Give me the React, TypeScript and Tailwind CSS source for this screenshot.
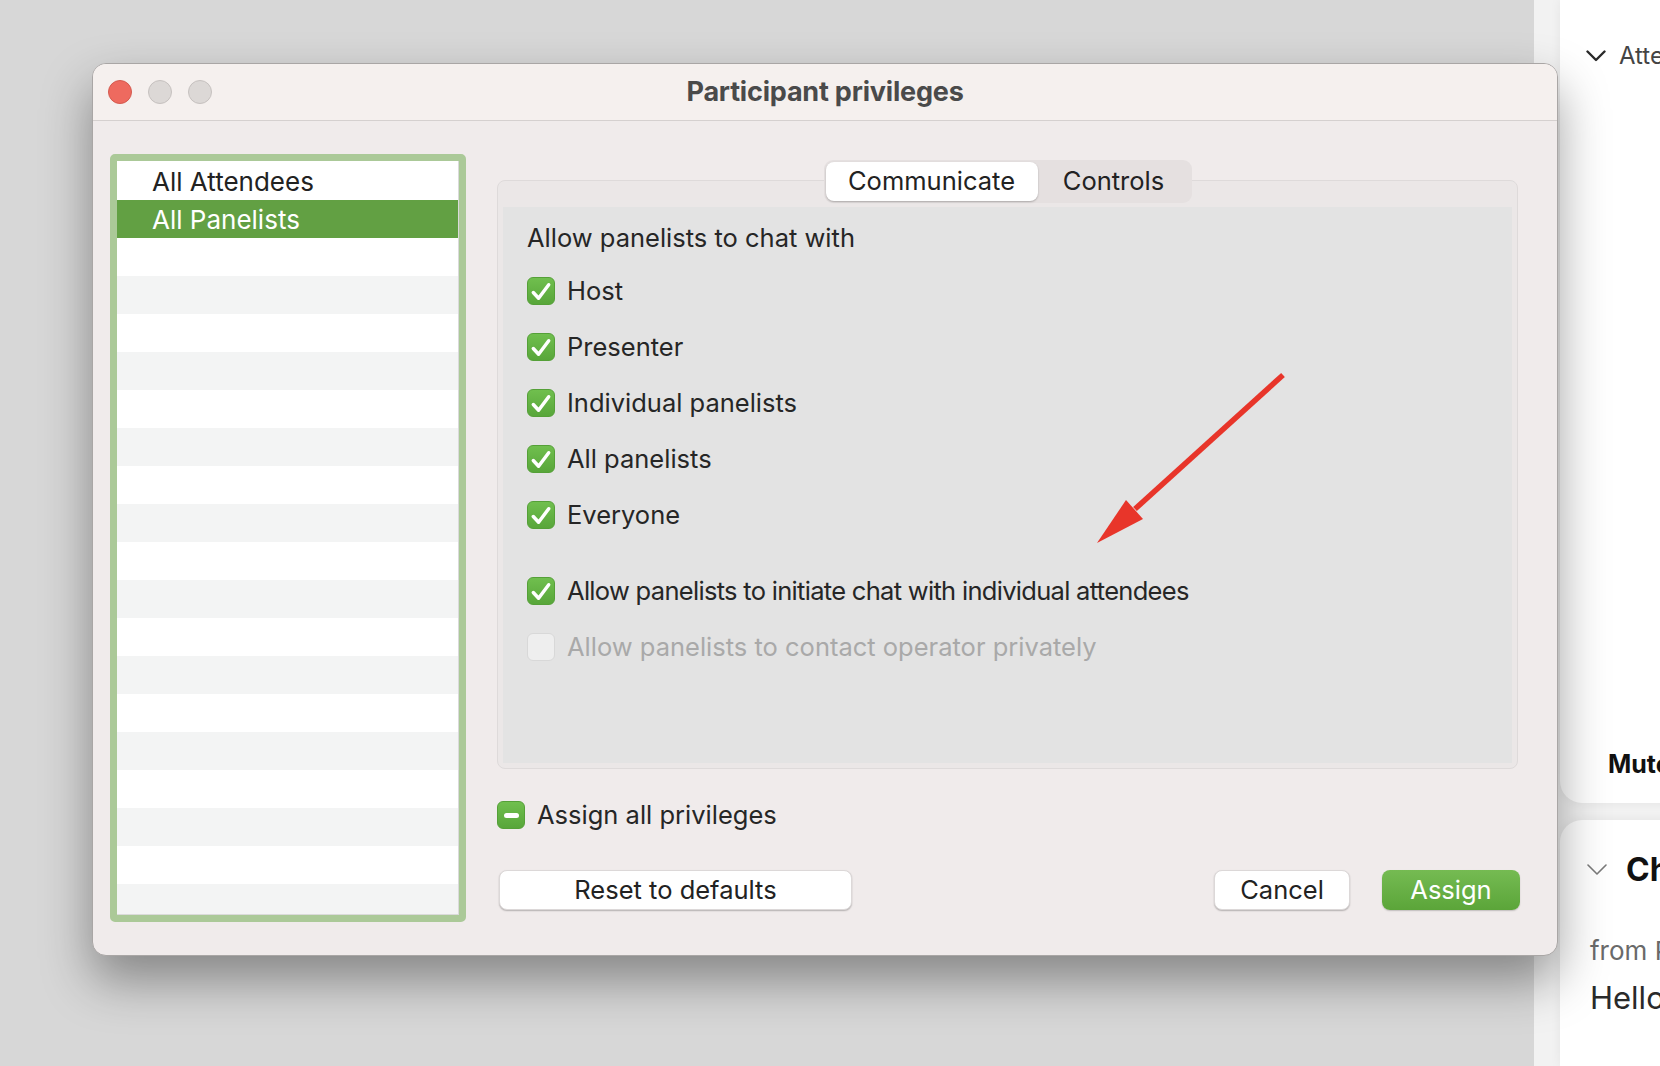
import React from "react";

const Check = () => (
  <svg viewBox="0 0 27 27" className="w-[27px] h-[27px]">
    <path
      d="M5.5 14.5 L11 20.5 L21.5 6.5"
      fill="none"
      stroke="white"
      strokeWidth="3.6"
      strokeLinecap="round"
      strokeLinejoin="round"
    />
  </svg>
);

const CheckBox = ({ state }: { state: "on" | "off" | "mixed" }) => {
  if (state === "off") {
    return (
      <div className="w-[28px] h-[28px] shrink-0 rounded-[6px] border border-[#d8d8d8] bg-[#eeeeee]" />
    );
  }
  return (
    <div className="w-[28px] h-[28px] shrink-0 rounded-[6px] bg-gradient-to-b from-[#70bf4e] to-[#58a63a] border border-[#55a038] flex items-center justify-center">
      {state === "on" ? (
        <Check />
      ) : (
        <div className="w-[15px] h-[5px] rounded-full bg-white" />
      )}
    </div>
  );
};

const Option = ({
  label,
  state = "on",
  disabled,
  tight,
}: {
  label: string;
  state?: "on" | "off" | "mixed";
  disabled?: boolean;
  tight?: boolean;
}) => (
  <div className="h-[56px] flex items-center gap-[12px]">
    <CheckBox state={state} />
    <span
      className={
        (disabled ? "text-[#a9a9a9] " : "text-[#262626] ") +
        (tight
          ? "text-[25.5px] leading-[30px] tracking-[-0.7px]"
          : "text-[25.5px] leading-[30px]")
      }
    >
      {label}
    </span>
  </div>
);

const TrafficLight = ({ red }: { red?: boolean }) => (
  <div
    className={
      red
        ? "w-[24px] h-[24px] rounded-full bg-[#ee6a5f] border border-[#d45a4f]"
        : "w-[24px] h-[24px] rounded-full bg-[#dcd8d6] border border-[#c6c1bf]"
    }
  />
);

const listRows = Array.from({ length: 20 }, (_, i) => i);

const Arrow = () => (
  <svg
    className="absolute left-[998px] top-[306px] w-[200px] h-[180px] pointer-events-none"
    viewBox="0 0 200 180"
  >
    <line
      x1="192"
      y1="5"
      x2="44"
      y2="139"
      stroke="#e8352a"
      strokeWidth="5.5"
    />
    <polygon points="6,173 52,149 35,130" fill="#e8352a" />
  </svg>
);

export default function App() {
  return (
    <div className="flex w-[1660px] h-[1066px] overflow-hidden bg-[#d7d7d7] font-[Inter,'Liberation_Sans',sans-serif]">
      {/* desktop with the dialog */}
      <div className="w-[1534px] shrink-0 pl-[92px] pt-[63px] relative z-10">
        <div className="relative w-[1466px] h-[893px] flex flex-col rounded-[14px] border border-[#a9a6a5] bg-[#f0ebeb] shadow-[0_24px_50px_rgba(0,0,0,0.38)] overflow-hidden">
          {/* title bar */}
          <div className="h-[57px] shrink-0 flex items-center border-b border-[#d5d0cf] bg-[#f5f0ee] px-[15px] relative">
            <div className="flex gap-[16px]">
              <TrafficLight red />
              <TrafficLight />
              <TrafficLight />
            </div>
            <div className="absolute inset-0 flex items-center justify-center text-[27px] font-bold text-[#4a4a4a] tracking-[-0.2px]">
              Participant privileges
            </div>
          </div>

          {/* body */}
          <div className="flex-1 flex pl-[17px] pt-[33px]">
            {/* list of roles */}
            <div className="w-[356px] h-[768px] shrink-0 rounded-[5px] border-[7px] border-[#abc998] bg-white overflow-hidden">
              <div className="h-full border-r border-b border-[#dadada] pt-[1px] overflow-hidden">
                {listRows.map((i) => {
                  if (i === 0)
                    return (
                      <div
                        key={i}
                        className="h-[38px] pl-[35px] flex items-center text-[26px] text-[#222]"
                      >
                        All Attendees
                      </div>
                    );
                  if (i === 1)
                    return (
                      <div
                        key={i}
                        className="h-[38px] pl-[35px] flex items-center text-[26px] text-white bg-[#62a043]"
                      >
                        All Panelists
                      </div>
                    );
                  return (
                    <div
                      key={i}
                      className={
                        i % 2 === 1
                          ? "h-[38px] bg-[#f3f4f4]"
                          : "h-[38px] bg-white"
                      }
                    />
                  );
                })}
              </div>
            </div>

            {/* settings column */}
            <div className="ml-[31px] w-[1023px] flex flex-col">
              <div className="relative z-10 mt-[6px] flex justify-center pr-[2px]">
                <div className="flex p-[2px] rounded-[9px] bg-[#e5e0e0]">
                  <div className="w-[212px] h-[39px] rounded-[8px] bg-white shadow-[0_1px_2px_rgba(0,0,0,0.25)] flex items-center justify-center text-[25.5px] text-[#222]">
                    Communicate
                  </div>
                  <div className="w-[152px] h-[39px] flex items-center justify-center text-[25.5px] text-[#222]">
                    Controls
                  </div>
                </div>
              </div>

              <div className="-mt-[23px] w-[1021px] h-[589px] rounded-[8px] border border-[#dedada] bg-[#ebe7e7] pt-[26px] px-[5px] pb-[5px] flex flex-col">
                <div className="flex-1 bg-[#e3e3e3] pl-[24px] pt-[16px]">
                  <div className="text-[25.5px] leading-[30px] text-[#262626] mb-[10px]">
                    Allow panelists to chat with
                  </div>
                  <Option label="Host" />
                  <Option label="Presenter" />
                  <Option label="Individual panelists" />
                  <Option label="All panelists" />
                  <Option label="Everyone" />
                  <div className="h-[20px]" />
                  <Option
                    label="Allow panelists to initiate chat with individual attendees"
                    tight
                  />
                  <Option
                    label="Allow panelists to contact operator privately"
                    state="off"
                    disabled
                  />
                </div>
              </div>

              <div className="mt-[31px] h-[30px] flex items-center gap-[12px]">
                <CheckBox state="mixed" />
                <span className="text-[25.5px] leading-[30px] text-[#262626]">
                  Assign all privileges
                </span>
              </div>

              <div className="mt-[40px] flex items-center">
                <button className="ml-[2px] w-[353px] h-[40px] rounded-[8px] bg-white border border-[#dcd8d8] shadow-[0_1px_1.5px_rgba(0,0,0,0.25)] text-[25.5px] text-[#222]">
                  Reset to defaults
                </button>
                <button className="ml-auto w-[136px] h-[40px] rounded-[8px] bg-white border border-[#dcd8d8] shadow-[0_1px_1.5px_rgba(0,0,0,0.25)] text-[25.5px] text-[#222]">
                  Cancel
                </button>
                <button className="ml-[32px] w-[138px] h-[40px] rounded-[8px] bg-gradient-to-b from-[#75bb52] to-[#5ba539] shadow-[0_1px_1.5px_rgba(0,0,0,0.2)] text-[25.5px] text-white">
                  Assign
                </button>
              </div>
            </div>
          </div>

          <Arrow />
        </div>
      </div>

      {/* side panel of the main app */}
      <div className="flex-1 bg-[#f2f2f2] pl-[26px] flex flex-col">
        <div className="h-[803px] bg-white rounded-bl-[22px] shadow-[0_0_12px_rgba(0,0,0,0.06)] flex flex-col pl-[26px]">
          <div className="mt-[41px] h-[30px] flex items-center gap-[13px] whitespace-nowrap">
            <svg viewBox="0 0 20 12" className="w-[20px] h-[12px] shrink-0">
              <path
                d="M1.5 1.5 L10 10 L18.5 1.5"
                fill="none"
                stroke="#2a2a2a"
                strokeWidth="2.4"
                strokeLinecap="round"
                strokeLinejoin="round"
              />
            </svg>
            <span className="text-[24px] text-[#444]">Attendees</span>
          </div>
          <div className="mt-auto mb-[23px] pl-[22px] h-[30px] flex items-center text-[25px] font-bold text-[#111] whitespace-nowrap">
            Mute
          </div>
        </div>
        <div className="mt-[17px] flex-1 bg-white rounded-tl-[22px] shadow-[0_0_12px_rgba(0,0,0,0.06)] flex flex-col pl-[30px] whitespace-nowrap">
          <div className="mt-[30px] h-[40px] flex items-center gap-[19px] -ml-[3px]">
            <svg viewBox="0 0 20 12" className="w-[20px] h-[12px] shrink-0">
              <path
                d="M1 1 L10 10 L19 1"
                fill="none"
                stroke="#7a7a7a"
                strokeWidth="1.6"
                strokeLinecap="round"
                strokeLinejoin="round"
              />
            </svg>
            <span className="text-[32px] font-bold text-[#111]">Chat</span>
          </div>
          <div className="mt-[40px] h-[40px] flex items-center text-[26px] text-[#6a6a6a]">
            from Panelist
          </div>
          <div className="mt-[8px] h-[40px] flex items-center text-[31px] text-[#2a2a2a]">
            Hello
          </div>
        </div>
      </div>
    </div>
  );
}
